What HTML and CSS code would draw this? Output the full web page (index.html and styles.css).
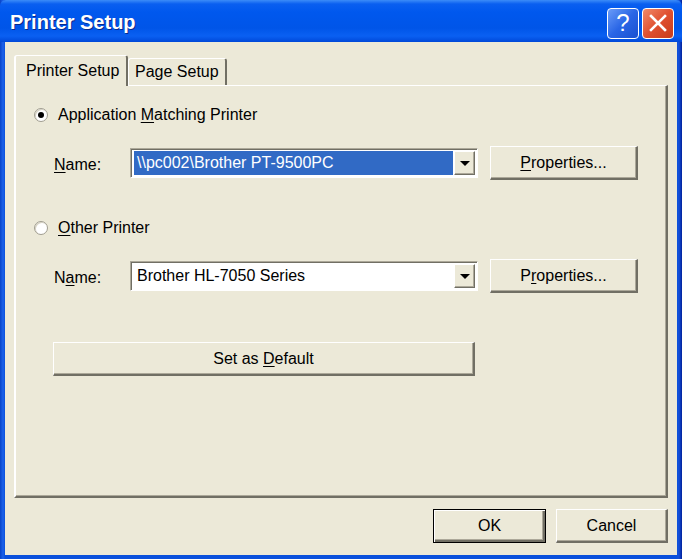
FILE: index.html
```html
<!DOCTYPE html>
<html lang="en">
<head>
    <meta charset="UTF-8">
    <title>Printer Setup</title>
    <link rel="stylesheet" href="styles.css">
</head>
<body>

<div class="window">
    <div class="titlebar">
        <span class="title">Printer Setup</span>
        <div class="title-buttons">
            <button class="tb help">?</button>
            <button class="tb close">
                <svg width="20" height="20" viewBox="0 0 20 20">
                    <path d="M3 3 L17 17 M17 3 L3 17" stroke="#fff" stroke-width="2.6" stroke-linecap="square"/>
                </svg>
            </button>
        </div>
    </div>

    <div class="client">
        <div class="tabs">
            <div class="tab active">Printer Setup</div>
            <div class="tab">Page Setup</div>
        </div>

        <div class="panel">
            <label class="radio-row">
                <span class="radio checked"></span>
                <span>Application <u>M</u>atching Printer</span>
            </label>
            <div class="name-row">
                <span class="label"><u>N</u>ame:</span>
                <div class="combo">
                    <div class="combo-field"><span class="selected">\\pc002\Brother PT-9500PC</span></div>
                    <div class="combo-arrow"><span class="arrow"></span></div>
                </div>
                <button class="btn"><u>P</u>roperties...</button>
            </div>

            <label class="radio-row second">
                <span class="radio"></span>
                <span><u>O</u>ther Printer</span>
            </label>
            <div class="name-row">
                <span class="label">N<u>a</u>me:</span>
                <div class="combo">
                    <div class="combo-field"><span>Brother HL-7050 Series</span></div>
                    <div class="combo-arrow"><span class="arrow"></span></div>
                </div>
                <button class="btn">P<u>r</u>operties...</button>
            </div>

            <button class="btn default-btn">Set as <u>D</u>efault</button>
        </div>

        <div class="footer">
            <button class="btn ok">OK</button>
            <button class="btn">Cancel</button>
        </div>
    </div>
</div>

</body>
</html>
```

FILE: styles.css
```css
:root {
    --face: #ece9d8;
    --shadow: #aca899;
    --dark: #716f64;
    --select: #316ac5;
}
body {
    margin: 0;
    width: 682px;
    height: 559px;
    overflow: hidden;
    font-family: 'Liberation Sans', Arial, sans-serif;
    font-size: 16px;
    color: #000;
}
u {
    text-decoration: underline;
    text-underline-offset: 2px;
}
.window {
    height: 559px;
    display: flex;
    flex-direction: column;
    box-sizing: border-box;
    padding: 0 5px 4px 5px;
    background: linear-gradient(90deg, #0843c8 0, #1c62ea 3px, #0a50dc 5px, #0a50dc 677px, #1650d8 679px, #00209a 682px);
}
.titlebar {
    height: 42px;
    margin: 0 -5px;
    padding: 0 8px 0 10px;
    display: flex;
    align-items: center;
    justify-content: space-between;
    border-radius: 6px 6px 0 0;
    background: linear-gradient(#3c8cf8 0, #0a5ff0 4px, #0058ee 12px, #0055e8 28px, #0a60f2 36px, #0048d8 42px);
}
.title {
    color: #fff;
    font-weight: bold;
    font-size: 20px;
    text-shadow: 1px 1px 0 #0a2a8a;
    margin-top: 2px;
}
.title-buttons {
    display: flex;
    gap: 3px;
    margin-top: 4px;
}
.tb {
    width: 32px;
    height: 31px;
    border: 1px solid #fff;
    border-radius: 4px;
    padding: 0;
    display: flex;
    align-items: center;
    justify-content: center;
    color: #fff;
    font-family: 'Liberation Sans', Arial, sans-serif;
    font-size: 24px;
}
.help {
    background: linear-gradient(135deg, #6a9cf8 0, #2a66e6 50%, #1a50d0 100%);
}
.close {
    background: linear-gradient(135deg, #f08a6a 0, #e05030 50%, #c83c1c 100%);
}
.client {
    flex: 1;
    background: var(--face);
    padding: 13px 9px 11px 9px;
    display: flex;
    flex-direction: column;
}
.tabs {
    display: flex;
    align-items: flex-end;
    height: 30px;
    position: relative;
    z-index: 1;
}
.tab {
    height: 27px;
    padding: 0 6px;
    display: flex;
    align-items: center;
    white-space: nowrap;
    border: 1px solid #fff;
    border-right: 2px solid var(--dark);
    border-bottom: none;
    border-radius: 3px 3px 0 0;
    background: var(--face);
    box-sizing: border-box;
}
.tab.active {
    height: 31px;
    width: 114px;
    padding: 0 0 0 10px;
    margin-bottom: -1px;
    border-left: 2px solid #fff;
}
.panel {
    height: 413px;
    box-sizing: border-box;
    border-top: 1px solid #fff;
    border-left: 2px solid #fff;
    border-right: 2px solid var(--dark);
    border-bottom: 2px solid var(--dark);
    box-shadow: inset -1px -1px 0 var(--shadow);
    padding: 17px 0 0 18px;
}
.radio-row {
    display: flex;
    align-items: center;
    gap: 10px;
    height: 24px;
}
.radio-row.second {
    margin-top: 36px;
}
.radio {
    width: 14px;
    height: 14px;
    border-radius: 50%;
    background: #fff;
    box-sizing: border-box;
    border: 1px solid #a09d90;
    box-shadow: inset 1px 1px 0 #d8d4c4;
    display: flex;
    align-items: center;
    justify-content: center;
}
.radio.checked::after {
    content: "";
    width: 6px;
    height: 6px;
    border-radius: 50%;
    background: #000;
}
.name-row {
    display: grid;
    grid-template-columns: 64px 348px 148px;
    column-gap: 12px;
    align-items: center;
    margin: 19px 0 0 20px;
}
.name-row .label {
    margin-top: 4px;
}
.combo {
    height: 30px;
    display: flex;
    box-sizing: border-box;
    border: 1px solid var(--shadow);
    border-right-color: #fff;
    border-bottom-color: #fff;
    background: #fff;
    box-shadow: inset 1px 1px 0 var(--dark);
    padding: 2px 2px 2px 3px;
}
.combo-field {
    flex: 1;
    display: flex;
    align-items: center;
}
.combo-field span {
    padding: 0 3px;
    height: 100%;
    display: flex;
    align-items: center;
    flex: 1;
}
.combo-field .selected {
    background: var(--select);
    color: #fff;
    margin-right: 1px;
}
.combo-arrow {
    width: 21px;
    background: var(--face);
    box-sizing: border-box;
    border-top: 1px solid #fff;
    border-left: 1px solid #fff;
    border-right: 1px solid var(--dark);
    border-bottom: 1px solid var(--dark);
    box-shadow: inset -1px -1px 0 var(--shadow);
    display: flex;
    align-items: center;
    justify-content: center;
}
.arrow {
    width: 0;
    height: 0;
    border-left: 5px solid transparent;
    border-right: 5px solid transparent;
    border-top: 5px solid #000;
}
.btn {
    height: 34px;
    background: var(--face);
    font-family: 'Liberation Sans', Arial, sans-serif;
    font-size: 16px;
    color: #000;
    padding: 0;
    box-sizing: border-box;
    border-top: 1px solid #fff;
    border-left: 1px solid #fff;
    border-right: 2px solid var(--dark);
    border-bottom: 2px solid var(--dark);
    box-shadow: inset -1px -1px 0 var(--shadow);
}
.default-btn {
    width: 422px;
    margin: 49px 0 0 19px;
    display: block;
}
.footer {
    display: flex;
    justify-content: flex-end;
    gap: 10px;
    margin-top: 11px;
}
.footer .btn {
    width: 112px;
}
.footer .ok {
    width: 113px;
    border: 1px solid #000;
    box-shadow: inset 1px 1px 0 #fff, inset -2px -2px 0 var(--dark), inset -3px -3px 0 var(--shadow);
}
```
